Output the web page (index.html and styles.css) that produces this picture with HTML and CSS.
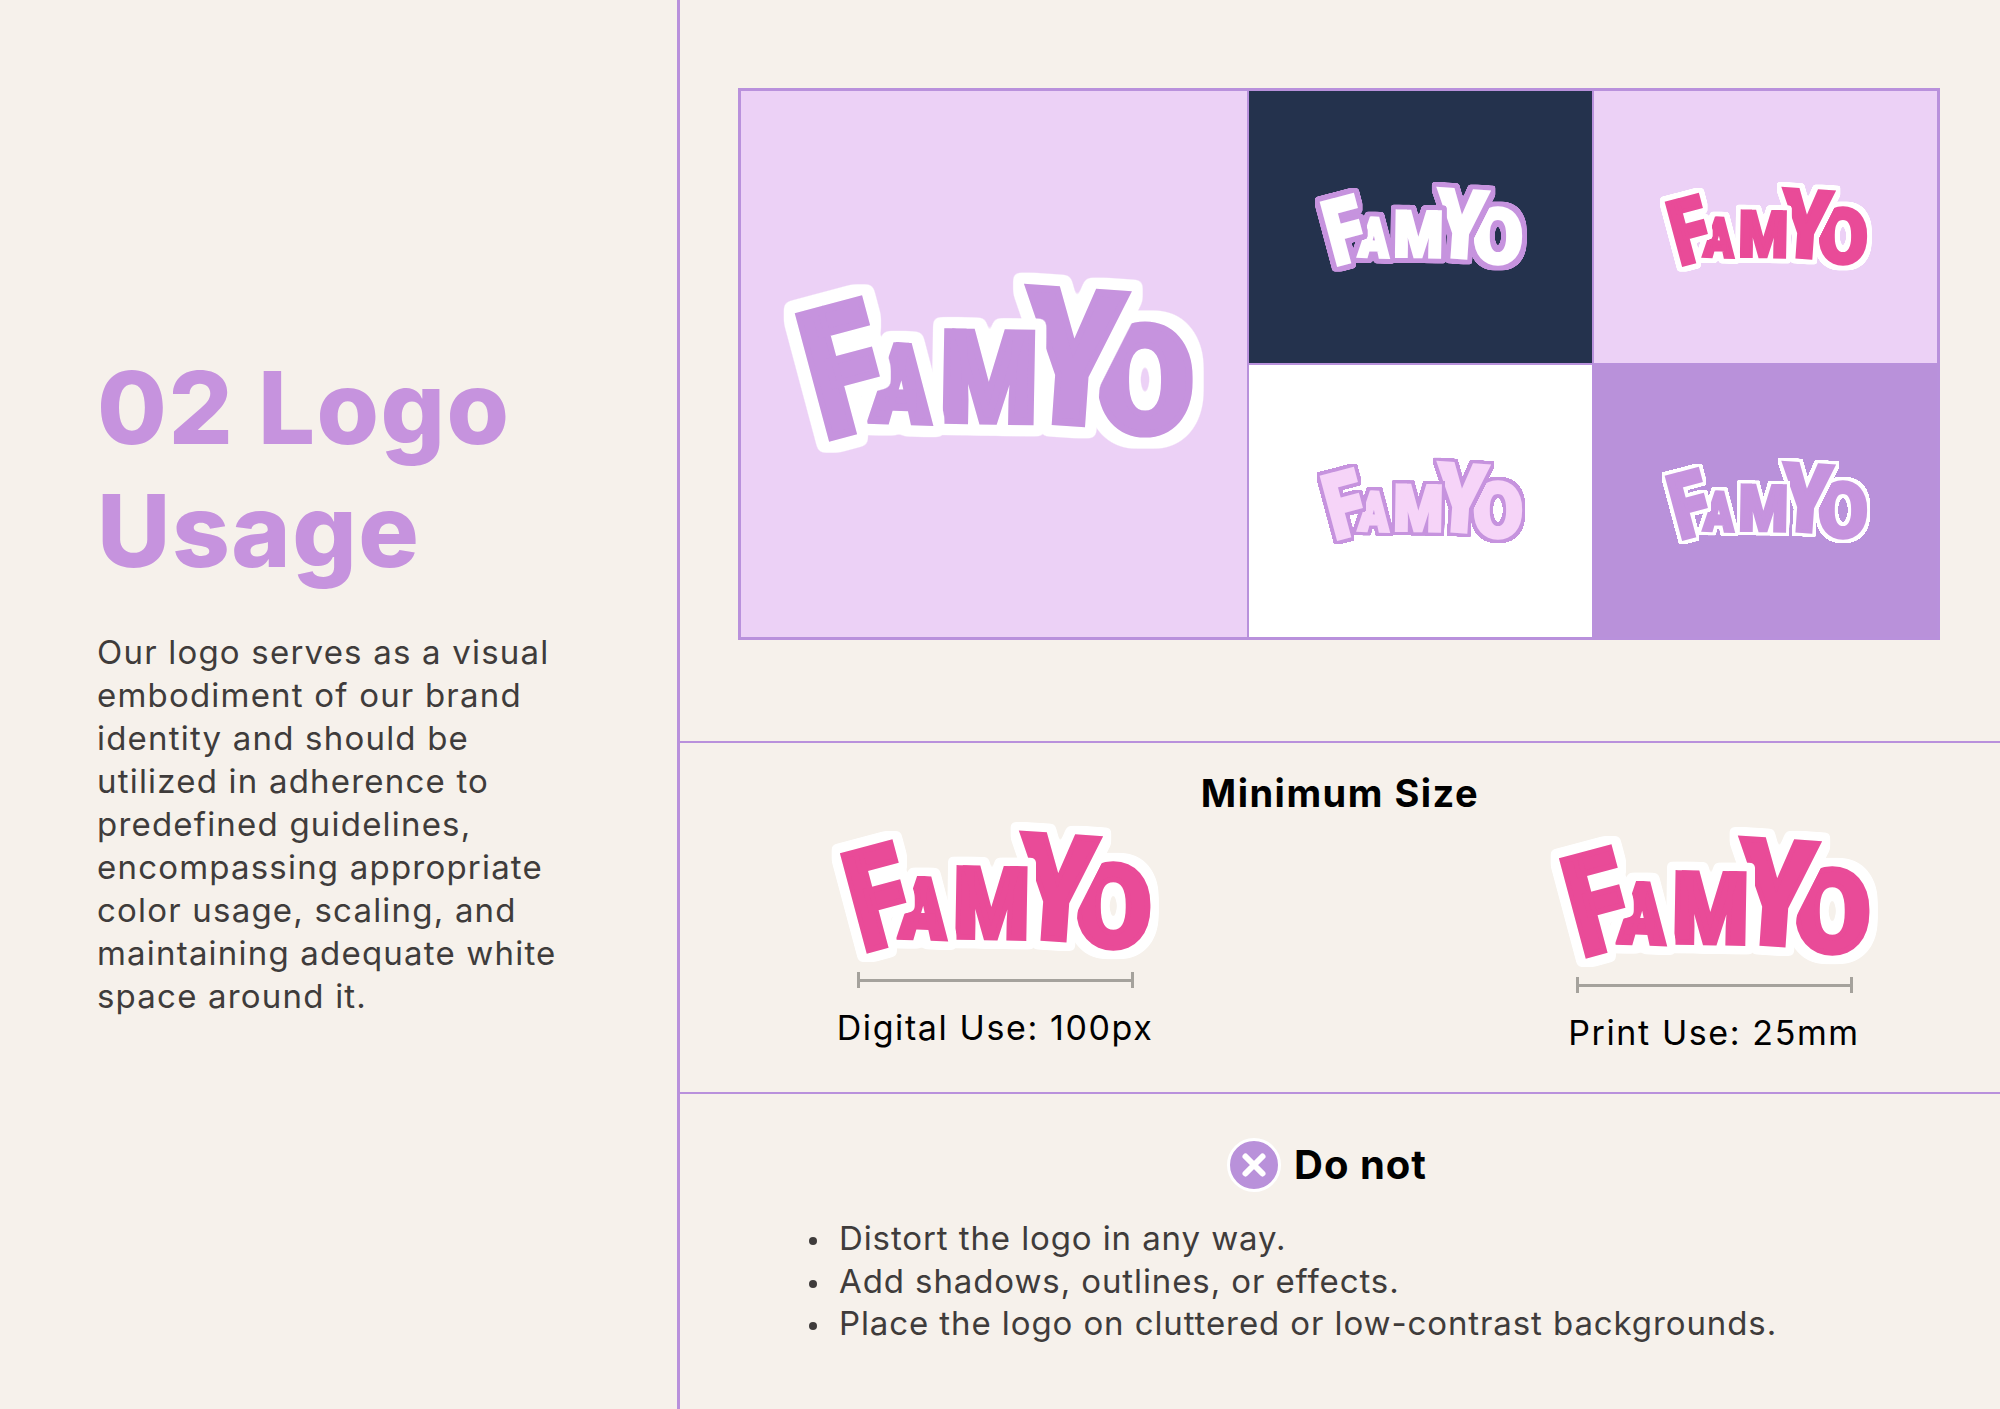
FILE: index.html
```html
<!DOCTYPE html>
<html lang="en">
<head>
<meta charset="utf-8">
<title>02 Logo Usage</title>
<link rel="stylesheet" href="styles.css">
</head>
<body>
<div class="page">
  <aside class="intro">
    <h1 class="intro-title">02 Logo<br>Usage</h1>
    <p class="intro-text">Our logo serves as a visual<br>embodiment of our brand<br>identity and should be<br>utilized in adherence to<br>predefined guidelines,<br>encompassing appropriate<br>color usage, scaling, and<br>maintaining adequate white<br>space around it.</p>
  </aside>
  <main class="content">
    <section class="variants">
      <div class="grid">
        <div class="cell cell-main cell-pale">
          <svg class="logo logo-big tone-lilac" viewBox="0 0 460 210">
            <defs>
              <filter id="halo-white-l" filterUnits="userSpaceOnUse" x="-40" y="-40" width="540" height="290" color-interpolation-filters="sRGB">
                <feMorphology in="SourceAlpha" operator="dilate" radius="9"/>
                <feGaussianBlur stdDeviation="3"/>
                <feComponentTransfer result="a"><feFuncA type="linear" slope="8" intercept="-1.6"/></feComponentTransfer>
                <feFlood flood-color="#fff"/>
                <feComposite in2="a" operator="in"/>
                <feMerge><feMergeNode/><feMergeNode in="SourceGraphic"/></feMerge>
              </filter>
              <filter id="halo-white-m" filterUnits="userSpaceOnUse" x="-40" y="-40" width="540" height="290" color-interpolation-filters="sRGB">
                <feMorphology in="SourceAlpha" operator="dilate" radius="8"/>
                <feGaussianBlur stdDeviation="2"/>
                <feComponentTransfer result="a"><feFuncA type="linear" slope="8" intercept="-1.6"/></feComponentTransfer>
                <feFlood flood-color="#fff"/>
                <feComposite in2="a" operator="in"/>
                <feMerge><feMergeNode/><feMergeNode in="SourceGraphic"/></feMerge>
              </filter>
              <filter id="halo-white-s" filterUnits="userSpaceOnUse" x="-40" y="-40" width="540" height="290" color-interpolation-filters="sRGB">
                <feMorphology in="SourceAlpha" operator="dilate" radius="6.5"/>
                <feGaussianBlur stdDeviation="1.5"/>
                <feComponentTransfer result="a"><feFuncA type="linear" slope="8" intercept="-1.6"/></feComponentTransfer>
                <feFlood flood-color="#fff"/>
                <feComposite in2="a" operator="in"/>
                <feMerge><feMergeNode/><feMergeNode in="SourceGraphic"/></feMerge>
              </filter>
              <filter id="halo-lilac-m" filterUnits="userSpaceOnUse" x="-40" y="-40" width="540" height="290" color-interpolation-filters="sRGB">
                <feMorphology in="SourceAlpha" operator="dilate" radius="8"/>
                <feGaussianBlur stdDeviation="2"/>
                <feComponentTransfer result="a"><feFuncA type="linear" slope="8" intercept="-1.6"/></feComponentTransfer>
                <feFlood flood-color="#c693de"/>
                <feComposite in2="a" operator="in"/>
                <feMerge><feMergeNode/><feMergeNode in="SourceGraphic"/></feMerge>
              </filter>
              <filter id="halo-lilac-s" filterUnits="userSpaceOnUse" x="-40" y="-40" width="540" height="290" color-interpolation-filters="sRGB">
                <feMorphology in="SourceAlpha" operator="dilate" radius="6.5"/>
                <feGaussianBlur stdDeviation="1.5"/>
                <feComponentTransfer result="a"><feFuncA type="linear" slope="8" intercept="-1.6"/></feComponentTransfer>
                <feFlood flood-color="#c693de"/>
                <feComposite in2="a" operator="in"/>
                <feMerge><feMergeNode/><feMergeNode in="SourceGraphic"/></feMerge>
              </filter>
              <g id="famyo">
                <g class="letter"><text class="glyph" transform="translate(332 174) scale(1.42 1.48)">O</text></g>
                <g class="letter"><text class="glyph" transform="translate(256 160) rotate(4) scale(1.55 1.85)">Y</text></g>
                <g class="letter"><text class="glyph" transform="translate(176 161) rotate(1) scale(1.1 1.24)">M</text></g>
                <g class="letter"><text class="glyph" transform="translate(107 161) rotate(2) scale(.85 1.05)">A</text></g>
                <g class="letter"><text class="glyph" transform="translate(60 180) rotate(-15) scale(1.34 1.76)">F</text></g>
              </g>
            </defs>
            <use href="#famyo"/>
          </svg>
        </div>
        <div class="cell cell-navy">
          <svg class="logo logo-small tone-white" viewBox="0 0 460 210"><use href="#famyo"/></svg>
        </div>
        <div class="cell cell-pale">
          <svg class="logo logo-small tone-pink-thin" viewBox="0 0 460 210"><use href="#famyo"/></svg>
        </div>
        <div class="cell cell-white">
          <svg class="logo logo-small tone-blush" viewBox="0 0 460 210"><use href="#famyo"/></svg>
        </div>
        <div class="cell cell-purple">
          <svg class="logo logo-small tone-outline" viewBox="0 0 460 210"><use href="#famyo"/></svg>
        </div>
      </div>
    </section>
    <section class="minimum">
      <h2 class="section-title">Minimum Size</h2>
      <div class="sizes">
        <figure class="size">
          <svg class="logo logo-mid tone-pink" viewBox="0 0 460 210"><use href="#famyo"/></svg>
          <div class="ruler"></div>
          <figcaption class="size-label">Digital Use: 100px</figcaption>
        </figure>
        <figure class="size size-print">
          <svg class="logo logo-mid tone-pink" viewBox="0 0 460 210"><use href="#famyo"/></svg>
          <div class="ruler"></div>
          <figcaption class="size-label">Print Use: 25mm</figcaption>
        </figure>
      </div>
    </section>
    <section class="rules">
      <div class="rules-head">
        <svg class="x-icon" viewBox="0 0 56 56">
          <circle class="x-disc" cx="28" cy="28" r="25.5"/>
          <path class="x-mark" d="M19.5 19.5 36.5 36.5M36.5 19.5 19.5 36.5"/>
        </svg>
        <h2 class="rules-title">Do not</h2>
      </div>
      <ul class="rules-list">
        <li>Distort the logo in any way.</li>
        <li>Add shadows, outlines, or effects.</li>
        <li>Place the logo on cluttered or low-contrast backgrounds.</li>
      </ul>
    </section>
  </main>
</div>
</body>
</html>
```

FILE: styles.css
```css
* { box-sizing: border-box; }
html, body { margin: 0; padding: 0; }
body { background: #f6f1eb; font-family: "Inter", "Liberation Sans", sans-serif; }

.page { display: flex; width: 2000px; height: 1409px; overflow: hidden; }

.intro { width: 680px; flex: none; padding: 346px 0 0 97px; border-right: 3px solid #b991dc; }
.intro-title { margin: 0 0 39px; font-size: 101px; line-height: 123px; font-weight: 800; letter-spacing: 1.5px; color: #c693de; }
.intro-text { margin: 0; font-size: 33px; line-height: 43px; font-weight: 400; letter-spacing: 1.2px; color: #3f3c3b; }

.content { flex: 1; display: flex; flex-direction: column; min-width: 0; }

.variants { height: 743px; flex: none; padding: 88px 0 0 58px; border-bottom: 2px solid #b991dc; }
.grid { display: grid; width: 1202px; height: 552px; grid-template-columns: 508px 345px 345px; grid-template-rows: 1fr 1fr; border: 2px solid #b991dc; }
.cell { display: flex; align-items: center; justify-content: center; border: 1px solid #b991dc; }
.cell-main { grid-row: 1 / 3; }
.cell-pale { background: #ecd1f6; }
.cell-navy { background: #24324d; }
.cell-white { background: #fff; }
.cell-purple { background: #b991da; }

.logo { display: block; overflow: visible; }
.logo-big { width: 460px; height: 210px; }
.logo-mid { width: 359px; height: 164px; }
.logo-small { width: 234px; height: 107px; }

.letter { filter: var(--halo); }
.glyph { font-family: "Roboto", "Liberation Sans", sans-serif; font-size: 100px; font-weight: 900; fill: var(--ink); stroke: var(--ink); stroke-width: var(--fat); stroke-linejoin: miter; vector-effect: non-scaling-stroke; }
.tone-lilac { --ink: #c693de; --halo: url(#halo-white-l); --fat: 7px; }
.tone-white { --ink: #fff; --halo: url(#halo-lilac-m); --fat: 3.5px; }
.tone-pink-thin { --ink: #e94b98; --halo: url(#halo-white-m); --fat: 3.5px; }
.tone-blush { --ink: #f6d4f8; --halo: url(#halo-lilac-s); --fat: 3.5px; }
.tone-outline { --ink: #c693de; --halo: url(#halo-white-s); --fat: 3.5px; }
.tone-pink { --ink: #e94b98; --halo: url(#halo-white-l); --fat: 5.5px; }

.minimum { height: 351px; flex: none; padding-top: 28px; border-bottom: 2px solid #b991dc; }
.section-title { margin: 0; text-align: center; font-size: 38px; line-height: 44px; font-weight: 700; letter-spacing: 1.5px; color: #000; }
.sizes { display: flex; justify-content: space-between; padding: 0 106px 0 135px; margin-top: -4px; }
.size { margin: 0; width: 360px; display: flex; flex-direction: column; align-items: center; }
.size-print { margin-top: 5px; }
.ruler { position: relative; width: 277px; height: 3px; margin-top: 4px; background: #a5a29c; }
.ruler::before, .ruler::after { content: ""; position: absolute; top: -7px; width: 3px; height: 16px; background: #a5a29c; }
.ruler::before { left: 0; }
.ruler::after { right: 0; }
.size-label { margin-top: 24px; font-size: 34px; line-height: 44px; font-weight: 400; letter-spacing: 1.6px; color: #000; }

.rules { flex: 1; padding: 43px 0 0 113px; }
.rules-head { display: flex; align-items: center; justify-content: center; gap: 12px; padding-right: 140px; }
.x-icon { width: 56px; height: 56px; flex: none; }
.x-disc { fill: #b991da; stroke: #fff; stroke-width: 3px; }
.x-mark { fill: none; stroke: #fff; stroke-width: 6px; stroke-linecap: round; }
.rules-title { margin: 0; font-size: 40px; line-height: 48px; font-weight: 700; letter-spacing: 1px; color: #000; }
.rules-list { margin: 24px 0 0; padding: 0; list-style: none; font-size: 33px; line-height: 42.7px; font-weight: 400; letter-spacing: .9px; color: #3f3c3b; }
.rules-list li { position: relative; padding-left: 46px; }
.rules-list li::before { content: ""; position: absolute; left: 0; top: 20px; width: 8px; height: 8px; border-radius: 50%; background: #3f3c3b; margin-left: 16px; }
```
